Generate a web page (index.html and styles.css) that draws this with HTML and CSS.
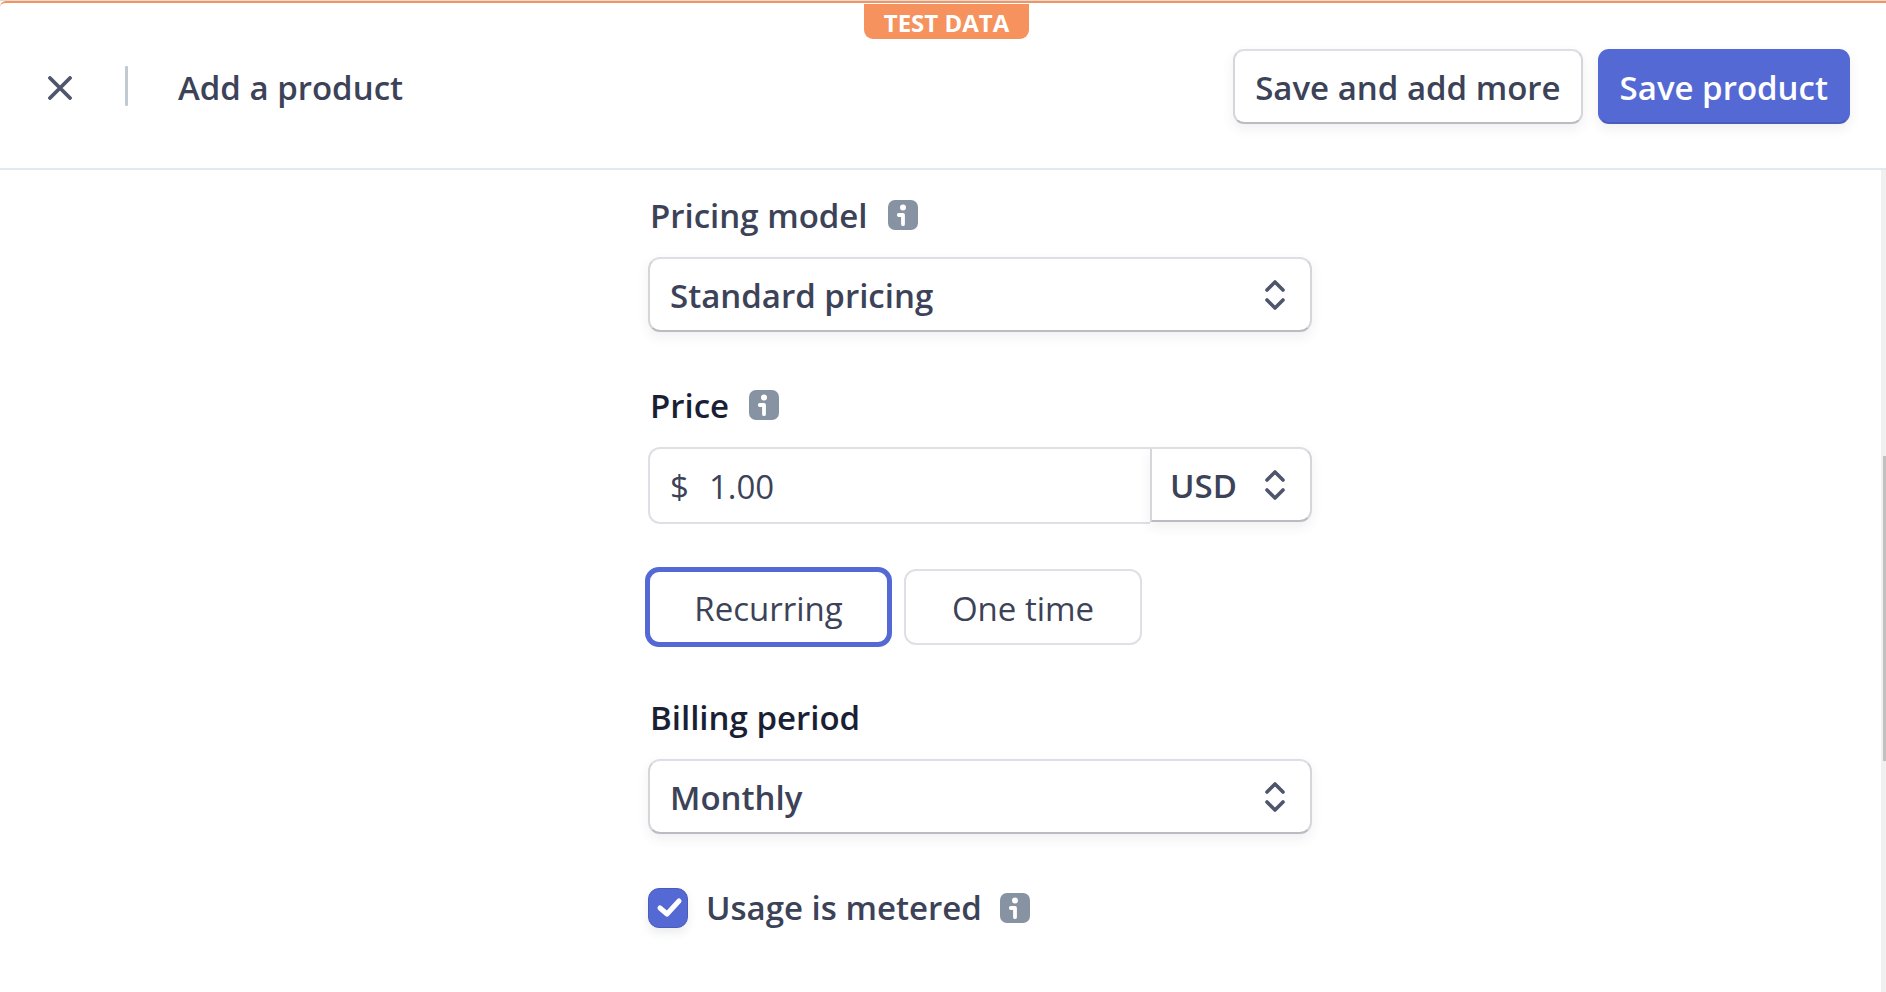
FILE: index.html
```html
<!DOCTYPE html>
<html lang="en">
<head>
<meta charset="utf-8">
<meta name="viewport" content="width=device-width, initial-scale=1">
<title>Add a product</title>
<link rel="stylesheet" href="styles.css">
</head>
<body>
<svg class="sprite" aria-hidden="true">
  <symbol id="info" viewBox="0 0 30 30">
    <rect width="30" height="30" rx="7" fill="#8792a2"/>
    <circle cx="15" cy="7.500" r="3" fill="#fff"/>
    <path d="M10.800 15H15v9.200" fill="none" stroke="#fff" stroke-width="3.800" stroke-linecap="round" stroke-linejoin="round"/>
  </symbol>
  <symbol id="chevrons" viewBox="0 0 20 30">
    <path d="M2 10l8-8 8 8M2 20l8 8 8-8" fill="none" stroke="#4f566b" stroke-width="3.600" stroke-linecap="round" stroke-linejoin="round"/>
  </symbol>
</svg>
<div class="page">
  <header class="header">
    <button class="close" type="button" aria-label="Close">
      <svg viewBox="0 0 24 24"><path d="M2 2l20 20M22 2L2 22" fill="none" stroke="#4f566b" stroke-width="3.800" stroke-linecap="round"/></svg>
    </button>
    <span class="divider"></span>
    <h1 class="title">Add a product</h1>
    <div class="actions">
      <button class="btn" type="button">Save and add more</button>
      <button class="btn btn-primary" type="button">Save product</button>
    </div>
    <div class="badge">TEST DATA</div>
  </header>
  <div class="body">
    <main class="content">
      <form class="form">
        <div class="field">
          <div class="label-row">
            <label for="model" class="label">Pricing model</label>
            <svg class="info"><use href="#info"/></svg>
          </div>
          <div class="select">
            <select id="model"><option>Standard pricing</option></select>
            <svg class="chevrons"><use href="#chevrons"/></svg>
          </div>
        </div>
        <div class="field field-price">
          <div class="label-row">
            <label for="price" class="label label-dark">Price</label>
            <svg class="info"><use href="#info"/></svg>
          </div>
          <div class="price">
            <div class="amount">
              <span>$</span>
              <input id="price" type="text" value="1.00">
            </div>
            <div class="select select-currency">
              <select aria-label="Currency"><option>USD</option></select>
              <svg class="chevrons"><use href="#chevrons"/></svg>
            </div>
          </div>
        </div>
        <div class="toggle">
          <button class="choice choice-active" type="button" aria-pressed="true">Recurring</button>
          <button class="choice" type="button" aria-pressed="false">One time</button>
        </div>
        <div class="field">
          <div class="label-row">
            <label for="period" class="label label-dark">Billing period</label>
          </div>
          <div class="select">
            <select id="period"><option>Monthly</option></select>
            <svg class="chevrons"><use href="#chevrons"/></svg>
          </div>
        </div>
        <div class="check-row">
          <span class="check">
            <input id="metered" type="checkbox" checked>
            <svg viewBox="0 0 40 40"><path d="M12 20l7 6 12-13" fill="none" stroke="#fff" stroke-width="5" stroke-linecap="round" stroke-linejoin="round"/></svg>
          </span>
          <label for="metered" class="label">Usage is metered</label>
          <svg class="info"><use href="#info"/></svg>
        </div>
      </form>
    </main>
    <div class="track"><div class="thumb"></div></div>
  </div>
</div>
</body>
</html>
```

FILE: styles.css
```css
* {
  box-sizing: border-box;
}

body {
  margin: 0;
  background: #fff;
  color: #3c4257;
  font-family: "Open Sans", "Noto Sans", sans-serif;
  font-size: 33px;
  line-height: 44px;
}

button,
input,
select {
  margin: 0;
  color: inherit;
  font: inherit;
}

.sprite {
  position: absolute;
  width: 0;
  height: 0;
}

.page {
  display: flex;
  flex-direction: column;
  min-height: 100vh;
  border-top: 1px solid #dcdcdc;
}

.header {
  position: relative;
  display: flex;
  align-items: flex-start;
  padding: 46px 36px 44px 48px;
  border-top: 2px solid #f5925e;
  border-top-left-radius: 6px;
  border-bottom: 2px solid #e3e8ee;
}

.close {
  width: 24px;
  height: 24px;
  margin-top: 27px;
  padding: 0;
  border: 0;
  background: none;
}

.close svg {
  display: block;
  width: 24px;
  height: 24px;
}

.divider {
  width: 3px;
  height: 40px;
  margin: 17px 50px 0 53px;
  border-radius: 1px;
  background: #c1c9d2;
}

.title {
  flex: 1;
  margin: 17px 0 0;
  font-size: 33px;
  font-weight: 600;
}

.actions {
  display: flex;
  gap: 15px;
}

.btn {
  height: 75px;
  padding: 2px 20px 0;
  border: 2px solid;
  border-color: #dedfe4 #d5d6da #bbbcc2;
  border-radius: 11px;
  background: #fff;
  font-weight: 600;
  box-shadow: 0 5px 12px rgba(60, 66, 87, 0.08);
}

.btn-primary {
  border-color: #5469d4 #5469d4 #4a5dbd;
  background: #5469d4;
  color: #fff;
}

.badge {
  position: absolute;
  top: 1px;
  left: 864px;
  width: 165px;
  height: 35px;
  border-radius: 0 0 9px 9px;
  background: #f5925e;
  color: #fff;
  font-size: 24px;
  font-weight: 700;
  line-height: 38px;
  text-align: center;
}

.body {
  display: flex;
  flex: 1;
}

.content {
  flex: 1;
  padding: 24px 0 40px 79px;
}

.form {
  display: flex;
  flex-direction: column;
  width: 664px;
  margin: 0 auto;
}

.field {
  margin-bottom: 52px;
}

.field-price {
  margin-bottom: 45px;
}

.label-row {
  display: flex;
  gap: 20px;
  height: 44px;
  margin-bottom: 19px;
  padding-left: 2px;
}

.label {
  font-weight: 600;
}

.label-dark {
  color: #1a1f36;
}

.info {
  width: 30px;
  height: 30px;
}

.label-row .info {
  margin-top: 6px;
}

.select {
  display: grid;
  height: 75px;
}

.select select {
  grid-area: 1 / 1;
  width: 100%;
  padding: 3px 60px 0 20px;
  border: 2px solid;
  border-color: #dedfe4 #d5d6da #bbbcc2;
  border-radius: 12px;
  background: #fff;
  box-shadow: 0 5px 12px rgba(60, 66, 87, 0.08);
  font-weight: 600;
  appearance: none;
}

.chevrons {
  grid-area: 1 / 1;
  place-self: center end;
  width: 20px;
  height: 30px;
  margin-right: 27px;
  pointer-events: none;
}

.price {
  display: flex;
  align-items: flex-start;
  height: 75px;
}

.amount {
  display: flex;
  flex: 1;
  align-items: center;
  gap: 20px;
  min-width: 0;
  height: 77px;
  padding: 2px 0 0 20px;
  border: 2px solid #dfe0e5;
  border-right: 0;
  border-radius: 12px 0 0 12px;
}

.amount input {
  flex: 1;
  min-width: 0;
  padding: 0;
  border: 0;
  background: none;
}

.select-currency {
  width: 162px;
}

.select-currency select {
  padding: 3px 50px 0 18px;
  border-radius: 0 12px 12px 0;
}

.toggle {
  display: flex;
  gap: 12px;
  margin: 0 0 49px -3px;
}

.choice {
  width: 238px;
  height: 76px;
  margin: 2px 0;
  padding: 4px 0 0;
  border: 2px solid #dfe0e5;
  border-radius: 12px;
  background: #fff;
}

.choice-active {
  width: 247px;
  height: 80px;
  margin: 0;
  border: 5px solid #5469d4;
  border-radius: 14px;
}

.check-row {
  display: flex;
  align-items: center;
  gap: 18px;
}

.check {
  display: grid;
  width: 40px;
  height: 40px;
}

.check input {
  grid-area: 1 / 1;
  width: 40px;
  height: 40px;
  border: 1px solid #4a5dbd;
  border-radius: 11px;
  background: #5469d4;
  box-shadow: 0 5px 10px rgba(60, 66, 87, 0.1);
  appearance: none;
}

.check svg {
  grid-area: 1 / 1;
  z-index: 1;
  pointer-events: none;
}

.track {
  display: grid;
  grid-template-rows: 286fr 304fr 231fr;
  width: 5px;
  padding-left: 2px;
  background: #f0f0f0;
}

.thumb {
  grid-row: 2;
  background: #c1c1c1;
}
```
